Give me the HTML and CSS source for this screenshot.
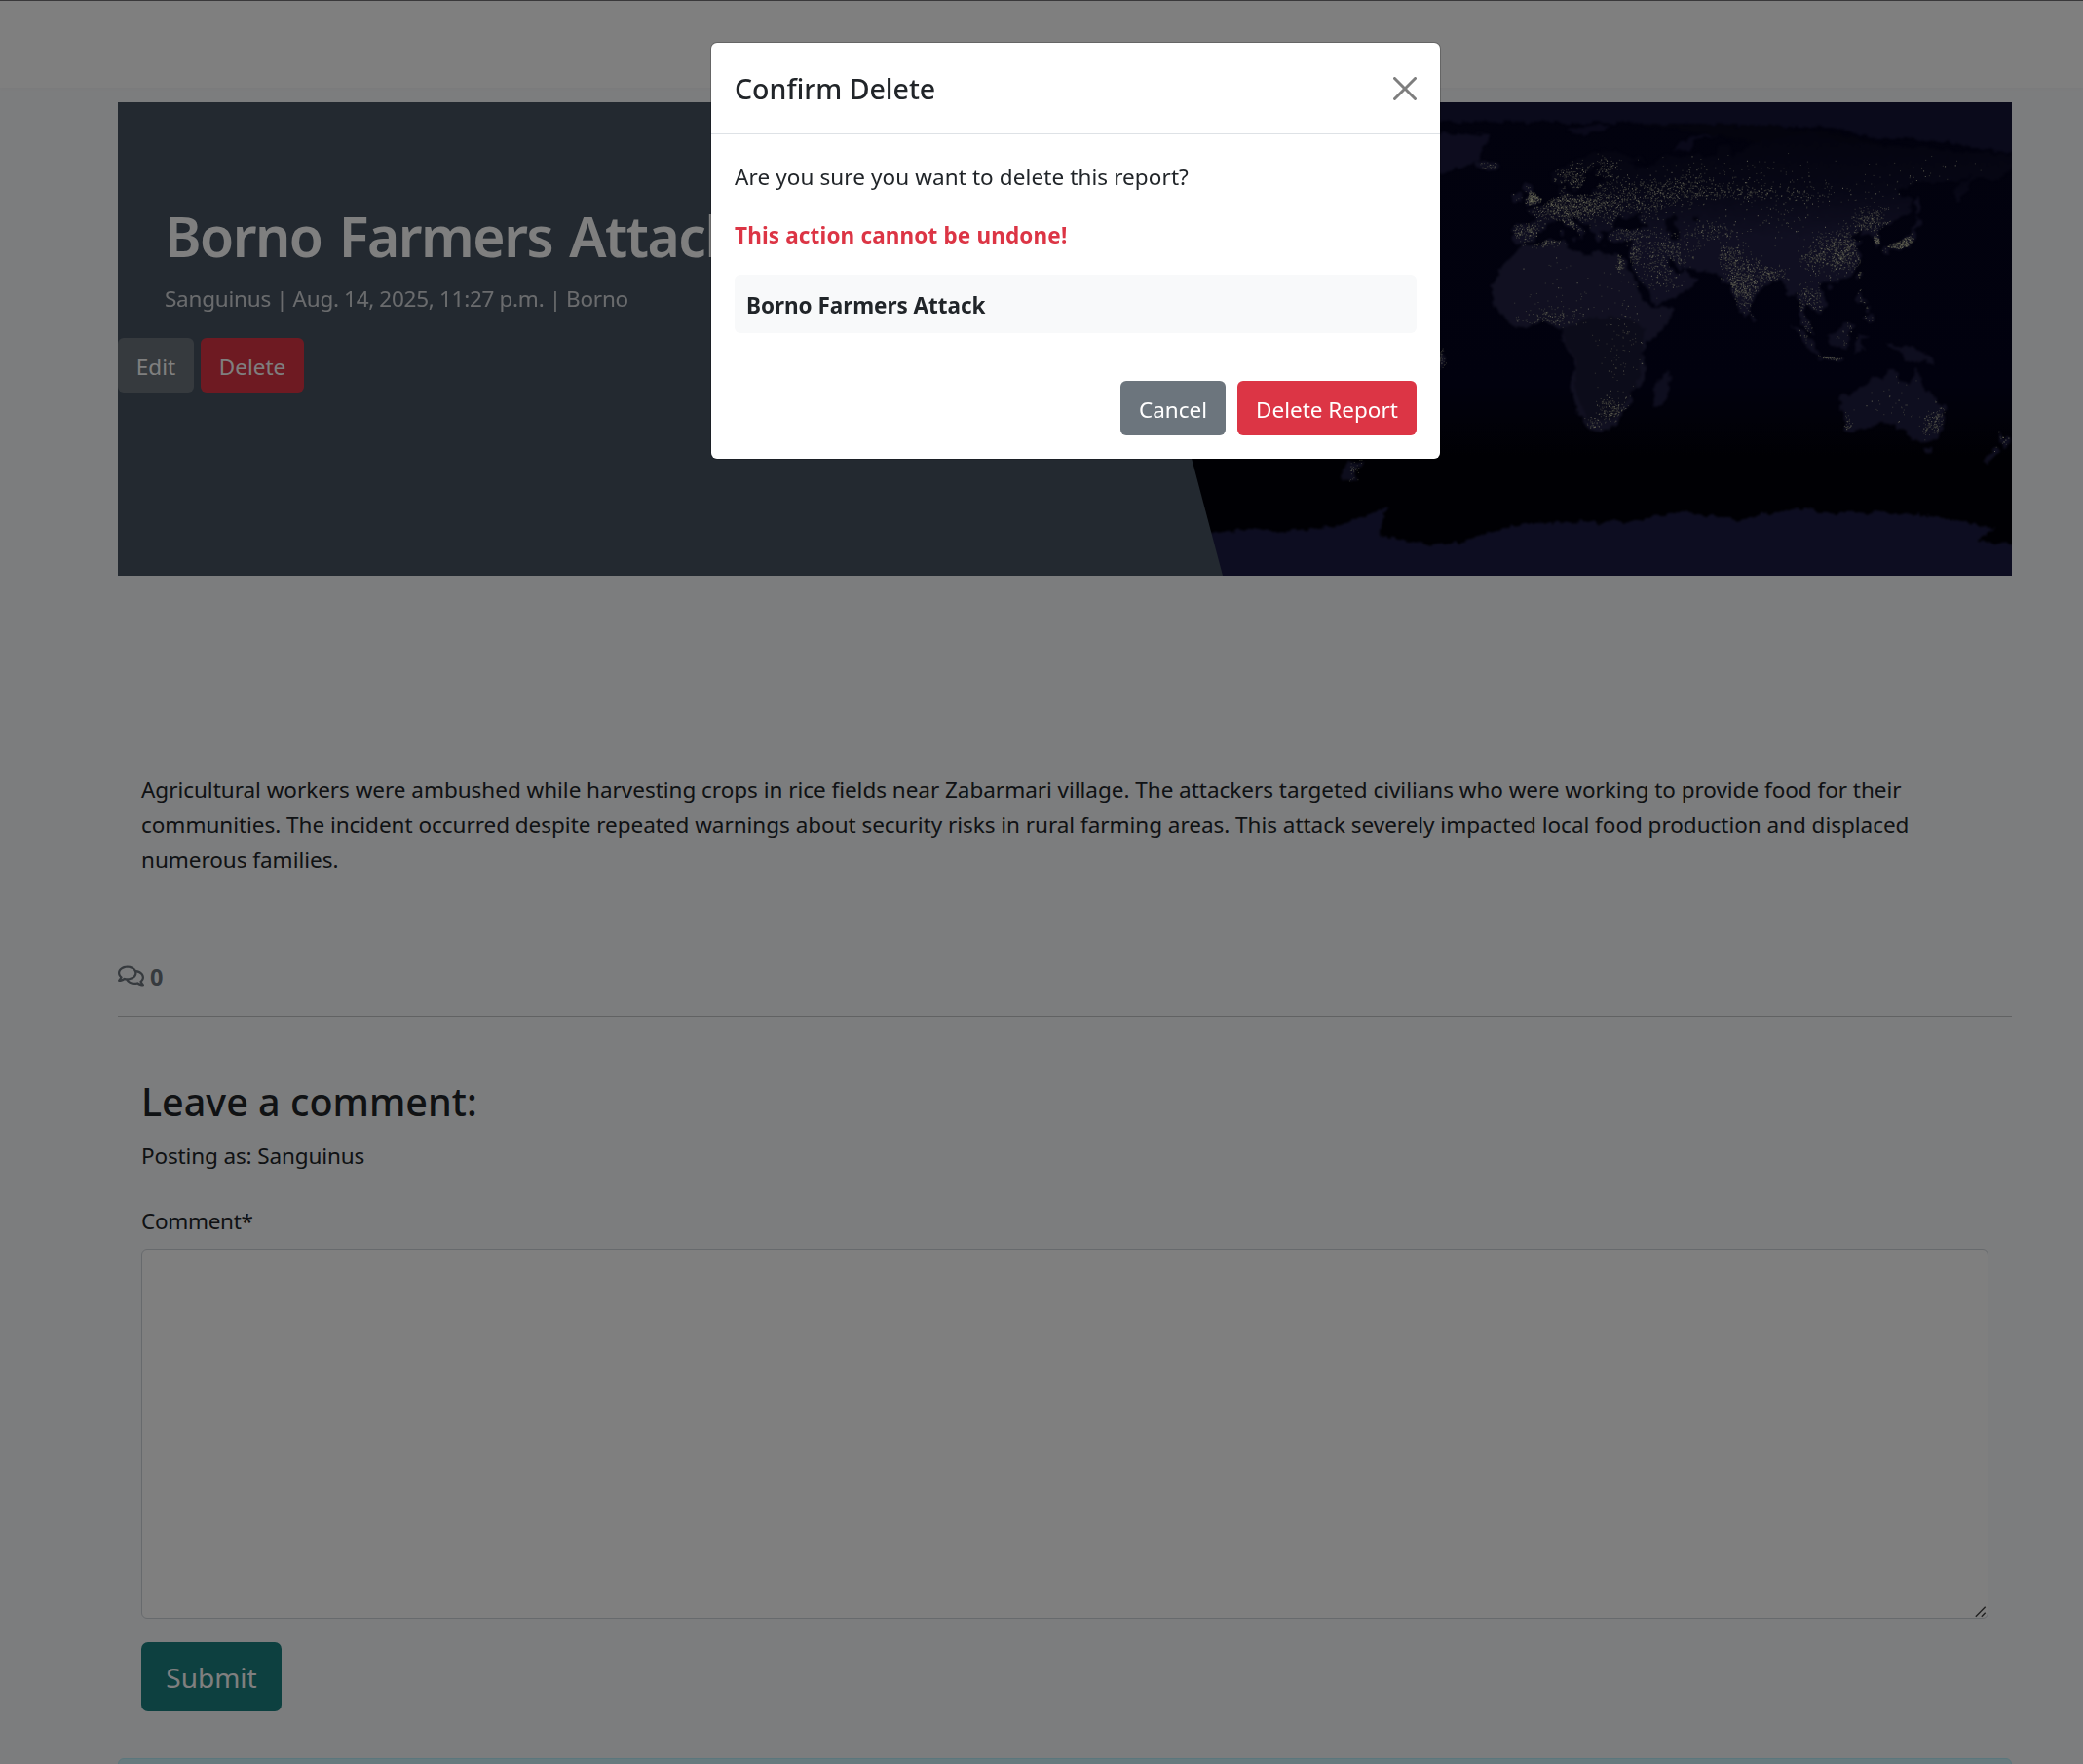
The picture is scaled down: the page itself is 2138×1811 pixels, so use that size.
FILE: index.html
```html
<!DOCTYPE html>
<html lang="en">
<head>
<meta charset="utf-8">
<title>Borno Farmers Attack</title>
<link rel="stylesheet" href="styles.css">
</head>
<body>
<header class="navbar"></header>
<main class="container">
  <section class="hero">
    <svg class="hero-map" viewBox="0 0 1944 486" aria-hidden="true">
      <defs>
        <filter id="coast" x="-5%" y="-5%" width="110%" height="110%" color-interpolation-filters="sRGB">
          <feTurbulence type="fractalNoise" baseFrequency="0.12" numOctaves="3" seed="4" result="n"/>
          <feDisplacementMap in="SourceGraphic" in2="n" scale="9" xChannelSelector="R" yChannelSelector="G" result="d"/>
          <feGaussianBlur in="d" stdDeviation="0.8"/>
        </filter>
        <linearGradient id="sea" x1="0" y1="0" x2="0" y2="1">
          <stop offset="0" stop-color="#04041c"/><stop offset=".6" stop-color="#03031c"/><stop offset=".75" stop-color="#010108"/><stop offset="1" stop-color="#010108"/>
        </linearGradient>
        <linearGradient id="north" gradientUnits="userSpaceOnUse" x1="0" y1="75" x2="0" y2="38">
          <stop offset="0" stop-color="#090920"/><stop offset=".5" stop-color="#0e0e2a"/><stop offset="1" stop-color="#201f42"/>
        </linearGradient>
      </defs>
      <rect width="1944" height="486" fill="url(#sea)"/>
      <g filter="url(#coast)">
        <path fill="#141436" d="M1000-10V20L1360 20 1620 22 1760 26 1800 36 1870 40 1954 54V-10Z"/>
        <path fill="#08081c" d="M1560 22 1700 24 1775 34 1830 48 1700 44Z"/>
        <path fill="#1a193c" d="M1340 32 1410 34 1400 50 1396 62 1370 68 1345 78Z"/>
        <path fill="#1b1b42" d="M1000 442 1124 442 1178 437 1187 442 1252 435 1278 426 1303 415 1296 435 1294 445 1342 454 1378 452 1405 442 1444 432 1546 431 1605 421 1662 428 1731 416 1755 422 1821 421 1875 427 1928 437 1908 450 1954 453V496H1000Z"/>
        <g transform="translate(1457.500 243) scale(2.73 -2.73)">
          <path id="europe" fill="url(#north)" d="M-9.500 37-9 43-1.500 43.400-1 46-4.500 48.300 1.500 50 4 52 8 54 8 57 10.500 57.500 10 55 14 54 20 54.500 22 57.500 24 59 30 60 25 60.300 21.500 61 22 63.500 25 65.500 22 65.800 17.500 62 18.500 60 16.500 57 14 55.400 11 59 8 58 5 59 5 62 12 66 17 69 25 71 31 70 41 67 34 66.600 38 64 44 66 46 68.300 54 68.500 60 69 67 69 68 73 73 73 73 68 80 73 87 75 104 77.700 113 74 128 73 140 72.500 160 70 170 70 180 69 180 65 177 62.500 170 60 163 60 162 56 157 51 156 57 164 62 155 59 142 59 135 54.700 141 53 140 48 132 43 127.500 40 129 36 126.500 34.500 126.500 37.500 125 39.500 121.500 39 122 40.500 118 39 119 37.200 122.300 37 119.500 35 122 31 121 28 117 23.500 110.500 21 108 21.500 106 19 109 13 107 10.500 105 9 104.500 10.500 100.500 13.400 99.500 10 103.400 4 104 1.400 101 3 98.300 8 98.500 13 97 17 94.300 16 91.500 22.500 87 21.500 82 16.700 80 13 80 10 77.500 8 75 12 73 18 72.500 21 70 21 67 24.800 61 25.200 57 27 53 26.700 50 30 48 30 50.500 26 52 24 56 26.200 56.500 24.500 60 22.500 57 18.500 52 15.500 45 12.800 43 13 42.500 16.500 39 21 35 28 34.300 31.300 36 36.500 30.500 36.500 27 37 26 40 30 41 36 41.500 41.500 41.700 37.500 45 39 47 35 46.500 33.500 44.700 30.500 46.400 28 43.500 28 41.200 23.500 40.500 24 38 23 36.500 19.500 41 19.500 42 14 45.300 12.300 45 13.700 43.500 18.500 40 16.500 39.700 17 38.500 15.700 38 15.500 40 12 42 9 44.400 3.500 43.300 3 41.800 0 40 0 38.700-2 36.800-5.500 36Z"/>
          <path id="africa" fill="#222142" d="M-17 15-17 21-13 28-10 31-6 35.800-2 35 3 37 10 37.300 11 34 15 32.300 20 31 20 32.800 25 31.700 32 31.200 34 27 37 21 39 15.500 43 11.800 51 11.900 50 8 46 2.500 41-2 39-6 40.500-11 40-16 35-20 35.500-24 32.500-27 30-31 26-34 20-34.800 18-33 15-27 12-18 13.700-11 12-5 9 0 9.500 4 5 5.500 2 6.300-4 5.200-8 4.400-13 8.500-16 12Z"/>
          <path fill="#16152f" d="M9 4 20 8 34 8 40 4 39-6 38-16 33-24 28-30 18-31 14-18 14-8 10 0Z" opacity=".7"/>
          <path id="isles" fill="#1d1c3e" d="M-5 50 1 51 1.500 52.800-1.500 55-2 57.500-5 58.500-5.500 56-3 54-5 52ZM-10 52-6 52-6 55-8 55-10 54ZM-24 65.500-22 64-18 63.500-14 65-16 66.500-22 66.300ZM80 9.500 82 7 80 6ZM44-25 47-25 50-15.500 49-12 44-17ZM95.500 5.500 98 4.500 104-2 106-6 102-4ZM105-6.200 108-6.800 114.500-7.500 114-8.700 106-7.200ZM109 1.500 111 1.500 117 7 119 5 117.500 0 116-4 110-2.500ZM119-5.500 120 1 125 1.500 121-.5 123-4.500 121-3 120.500-5.500ZM131-1 135-3 141-2.600 147-6 150-10.500 146-8.500 143-9 138-8.300 137-5 132-3ZM114-22 122-18 126-14 130-15 131-11.500 136.500-12 135.500-15 140-17.500 142.300-10.800 146-19 153-26 153-31 150-37.500 146-39 140-38 138-35 134-32.500 129-31.700 124-33.500 118-35 115-34 115.500-31 113.500-26ZM145-41 148-41 147-43.500ZM173-34.500 175-37 178.400-37.800 176-41 175-41 174-39ZM172.500-40.700 174-42 171-45 169-46.600 167-46ZM130 31.500 132 31.500 132 34 136 33.500 139 34.700 141 36 142 39.600 141 41.500 140 39 137 37 133 35.500 130.500 34 129.700 33ZM140 41.600 143.500 42 145.500 43.300 141.800 45.500 141.500 43.300ZM142 46 144 49 143 54 142 52ZM120.100 23 121 22 122 25 121 25ZM120 18.500 122 18.500 121.500 15 124 13 121 13.500 120 16ZM122 8 125.500 9.500 126.500 7 125 5.500ZM108.700 19 110 18.200 111 19.500 110 20.200ZM123 12 125 12.500 125 10 123 9.500ZM8.500 41 9.700 41 9.500 39 8.500 39ZM12.500 38 15.500 38 15 36.700ZM32.500 35 34.500 35.500 33.500 34.600ZM23.500 35.500 26 35.200 24 34.900Z"/>
          <path fill="#141334" d="M10 78 20 80.500 27 80 18 76.500ZM51 71 56 71 60 75 68 76.500 60 76.500 54 74Z"/>
          <path fill="#05051c" d="M47 44 51 47 53 45 50.500 44 53.500 40 53.500 37 50 37.500 49 41ZM58 46 61 46.500 61 44 59 44Z"/>
          <path fill="#1b1a3a" d="M-72-46-65-46-69-50-68-54-74-52Z"/>
          <path fill="#1f1d3e" d="M-50 0-35-6-35-9-39-14-40-22-50-26Z"/>
        </g>
      </g>
      <path id="glow" fill="none" stroke="#c0c29c" stroke-width="1" opacity=".5"/>
      <path id="cities" fill="none" stroke="#efeec4" stroke-width="1.200" opacity=".7"/>
    </svg>
    <div class="hero-panel"></div>
    <div class="hero-content">
      <div class="hero-text">
        <h1 class="title">Borno Farmers Attack</h1>
        <p class="byline">Sanguinus | Aug. 14, 2025, 11:27 p.m. | Borno</p>
      </div>
      <div class="actions">
        <button class="btn btn-secondary btn-edit">Edit</button>
        <button class="btn btn-danger btn-del">Delete</button>
      </div>
    </div>
  </section>

  <p class="report">Agricultural workers were ambushed while harvesting crops in rice fields near Zabarmari village. The attackers targeted civilians who were working to provide food for their communities. The incident occurred despite repeated warnings about security risks in rural farming areas. This attack severely impacted local food production and displaced numerous families.</p>

  <div class="count">
    <svg class="count-icon" viewBox="0 0 576 512" aria-hidden="true"><path fill="currentColor" d="M532 386.200c27.500-27.100 44-61.100 44-98.200 0-80-76.500-146.100-176.200-157.900C368.300 72.500 294.300 32 208 32 93.100 32 0 103.600 0 192c0 37 16.500 71 44 98.200-15.300 30.700-37.300 54.500-37.700 54.900-6.300 6.700-8.100 16.500-4.400 25 3.600 8.500 12 14 21.200 14 53.500 0 96.700-20.200 125.200-38.800 9.200 2.100 18.700 3.700 28.400 4.900C208.100 407.600 281.800 448 368 448c20.800 0 40.800-2.400 59.800-6.800C456.300 459.700 499.400 480 553 480c9.200 0 17.500-5.500 21.200-14 3.600-8.500 1.900-18.300-4.400-25-.4-.3-22.500-24.100-37.800-54.800zm-392.800-92.300L122.100 305c-14.100 9.100-28.500 16.300-43.100 21.400 2.700-4.700 5.400-9.700 8-14.800l15.500-31.100L77.700 256C64.200 242.600 48 220.700 48 192c0-60.700 73.300-112 160-112s160 51.300 160 112-73.300 112-160 112c-16.500 0-33-1.900-49-5.600l-19.800-4.500zM498.300 352l-24.700 24.400 15.500 31.100c2.600 5.100 5.300 10.100 8 14.800-14.600-5.100-29-12.300-43.100-21.400l-17.100-11.100-19.900 4.600c-16 3.700-32.500 5.600-49 5.600-54 0-102.200-20.100-131.300-49.700C338 339.500 416 272.900 416 192c0-3.400-.4-6.700-.7-10C479.700 196.500 528 238.800 528 288c0 28.700-16.200 50.600-29.700 64z"/></svg>
    <strong class="count-value">0</strong>
  </div>
  <hr class="rule">

  <form class="comment-form">
    <h3 class="form-title">Leave a comment:</h3>
    <p class="posting">Posting as: Sanguinus</p>
    <label class="label" for="body">Comment*</label>
    <div class="field-wrap">
      <textarea class="field" id="body"></textarea>
      <svg class="grip" viewBox="0 0 12 12" aria-hidden="true"><path d="M.8 10.700 10.700.8M6.800 10.700l3.900-3.900"/></svg>
    </div>
    <button class="btn-submit" type="button">Submit</button>
  </form>
  <div class="alert"></div>
</main>

<div class="backdrop"></div>
<div class="modal" role="dialog">
  <div class="modal-header">
    <h5 class="modal-title">Confirm Delete</h5>
    <svg class="close" viewBox="0 0 16 16" aria-label="Close"><path d="M.293.293a1 1 0 0 1 1.414 0L8 6.586 14.293.293a1 1 0 1 1 1.414 1.414L9.414 8l6.293 6.293a1 1 0 0 1-1.414 1.414L8 9.414l-6.293 6.293a1 1 0 0 1-1.414-1.414L6.586 8 .293 1.707a1 1 0 0 1 0-1.414z"/></svg>
  </div>
  <div class="modal-body">
    <p class="question">Are you sure you want to delete this report?</p>
    <p class="warning">This action cannot be undone!</p>
    <div class="subject">Borno Farmers Attack</div>
  </div>
  <div class="modal-footer">
    <button class="btn btn-secondary btn-cancel">Cancel</button>
    <button class="btn btn-danger btn-confirm">Delete Report</button>
  </div>
</div>
<script src="map.js"></script>
</body>
</html>
```
FILE: styles.css
```css
* { box-sizing: border-box; }

body {
  margin: 0;
  height: 1811px;
  overflow: hidden;
  background: #f9fafc;
  color: #212529;
  font: 22.5px/36px "Noto Sans", "Open Sans", sans-serif;
}

h1, h3, h5, p { margin: 0; }

.navbar {
  height: 90px;
  background: #fff;
  border-top: 1px solid #727074;
  box-shadow: 0 1px 4px rgba(0, 0, 0, .025);
}

.container { width: 1944px; margin: 15px 0 0 121px; }

/* Hero banner */
.hero { position: relative; height: 486px; overflow: hidden; background: #010108; }
.hero-map { position: absolute; inset: 0; width: 1944px; height: 486px; }
.hero-panel {
  position: absolute;
  inset: 0;
  background: #465361;
  clip-path: polygon(0 0, 1005px 0, 1134px 100%, 0 100%);
}
.hero-content { position: relative; padding-top: 101px; }
.hero-text { padding: 0 48px; color: #fff; }
.title { font-size: 57px; line-height: 72px; font-weight: 600; letter-spacing: -1.5px; word-spacing: 4px; }
.byline { margin-top: 11px; color: #dfe1e4; opacity: .93; letter-spacing: -.23px; word-spacing: -.4px; }
.actions { display: flex; gap: 7px; margin-top: 22px; }

.btn {
  height: 56px;
  padding: 3px 0 0;
  border: 0;
  border-radius: 6px;
  color: #fff;
  font: inherit;
  text-align: center;
}
.btn-secondary { background: #6c757d; }
.btn-danger { background: #dc3545; }
.btn-edit { width: 78px; }
.btn-del { width: 106px; }
.btn-cancel { width: 108px; }
.btn-confirm { width: 184px; }

/* Report */
.report { padding: 202px 24px 0; letter-spacing: -.025px; }
.count {
  display: flex;
  align-items: center;
  gap: 6px;
  margin-top: 84px;
  height: 36px;
  color: #6c757d;
}
.count-icon { width: 27px; height: 24px; margin-top: -2px; }
.count-value { margin-top: -1px; font-size: 23.5px; }
.rule { margin: 22px 0 0; border: 0; border-top: 1px solid #212529; opacity: .25; }

/* Comment form */
.comment-form { padding: 62px 24px 0; }
.form-title { font-size: 39.5px; line-height: 50px; font-weight: 500; }
.posting { margin-top: 13px; letter-spacing: -.13px; }
.label { display: block; margin-top: 31px; letter-spacing: -.3px; }
.field-wrap { position: relative; margin-top: 10px; }
.field {
  display: block;
  width: 100%;
  height: 380px;
  border: 1px solid #ced4da;
  border-radius: 6px;
  background: #fff;
  resize: none;
}
.grip {
  position: absolute;
  right: 2px;
  bottom: 1px;
  width: 12px;
  height: 12px;
  fill: none;
  stroke: #444;
  stroke-width: 1.5;
}
.btn-submit {
  display: block;
  width: 144px;
  height: 71px;
  margin-top: 24px;
  padding: 1px 0 0;
  border: 0;
  border-radius: 7px;
  background: #1a8080;
  color: #fff;
  font: 28px/45px "Noto Sans", "Open Sans", sans-serif;
}
.alert {
  height: 80px;
  margin-top: 48px;
  border: 1px solid #b6effb;
  border-radius: 6px;
  background: #cff4fc;
}

/* Dialog */
.backdrop { position: fixed; inset: 0; background: rgba(0, 0, 0, .5); }
.modal {
  position: absolute;
  top: 44px;
  left: 730px;
  width: 748px;
  border-radius: 6px;
  background: #fff;
  box-shadow: 0 0 0 1px rgba(0, 0, 0, .2);
}
.modal-header {
  display: flex;
  align-items: center;
  justify-content: space-between;
  height: 94px;
  padding: 0 24px;
  border-bottom: 1px solid #dee2e6;
}
.modal-title { padding-top: 2px; font-size: 28.5px; line-height: 45px; font-weight: 500; }
.close { width: 24px; height: 24px; opacity: .5; }
.modal-body { padding: 26px 24px 24px; }
.question { letter-spacing: .1px; }
.warning { margin: 24px 0 22px; color: #dc3545; font-weight: 700; letter-spacing: .15px; }
.subject { padding: 14px 12px 10px; border-radius: 6px; background: #f8f9fa; font-weight: 700; letter-spacing: -.04px; }
.modal-footer {
  display: flex;
  justify-content: flex-end;
  gap: 12px;
  padding: 24px;
  border-top: 1px solid #dee2e6;
}
```
FILE: map.js
```js
// City lights: [longitude, latitude, spread in longitude, spread in latitude, count]
const regions = [
  [8, 50, 9, 4, 620], [-2, 52.5, 2.5, 2.5, 200], [12, 43.5, 5, 4, 160], [-4, 40, 4.500, 3, 190],
  [22, 50, 8, 5, 360], [14, 60, 8, 5, 260], [26, 63, 4, 4, 120], [38, 53, 12, 6, 420], [34, 39, 8, 3, 170],
  [55, 56, 12, 4, 240], [75, 55, 18, 2.500, 180], [100, 55, 18, 3, 90], [3, 36, 6, 1.200, 90],
  [36, 32, 2, 4, 90], [31, 29, 1, 3, 70], [46, 26, 7, 6, 190], [50, 34, 7, 4, 170], [65, 40, 8, 3, 120],
  [77, 21, 6, 8, 620], [72, 31, 3, 3, 110], [88, 24, 4, 2, 110], [114, 33, 7, 6, 560], [125, 44, 6, 4, 200],
  [104, 30, 4, 4, 130], [137, 35.500, 5, 2.500, 420], [127.500, 36.500, 1.500, 1.500, 90], [121, 24, 1, 1.500, 40],
  [101, 14, 3, 5, 120], [107, 15, 3, 6, 80], [109, -7.200, 5, .8, 110], [102, 3, 3, 4, 70], [122, 13, 3, 5, 90],
  [115, 2, 7, 6, 50], [28, -27, 4, 4, 170], [20, -32, 4, 2, 50], [6, 8, 9, 3, 130], [32, -4, 7, 12, 90],
  [149, -33, 4, 4, 110], [151, -26, 2, 5, 40], [116, -32, 1.500, 2, 30], [174, -39, 3, 4, 60],
  [134, -25, 14, 8, 40], [-18, 65, 4, 1, 26], [140, 60, 20, 6, 60], [90, 45, 15, 6, 90],
  [-37, -8, 1.500, 3, 60], [-69, -49, 2, 3, 30], [70, 63, 25, 4, 110], [15, 15, 20, 10, 60]
];

let seed = 20250814;
function random() {
  seed = (seed * 1664525 + 1013904223) >>> 0;
  return seed / 4294967296;
}
function spread() {
  return (random() + random() + random() - 1.5) * 1.35;
}

const land = ["europe", "africa", "isles"].map(id => document.getElementById(id));
const svg = document.querySelector(".hero-map");
const dots = ["", ""];
for (const [lon, lat, dx, dy, count] of regions) {
  for (let i = 0; i < count; i++) {
    const point = svg.createSVGPoint();
    point.x = lon + spread() * dx;
    point.y = lat + spread() * dy;
    if (lon > -30 && !land.some(shape => shape.isPointInFill(point))) continue;
    const x = 1457 + point.x * 2.73;
    const y = 242.5 - point.y * 2.73;
    dots[random() < 0.16 ? 1 : 0] += `M${x.toFixed(1)} ${y.toFixed(1)}h1`;
  }
}
document.getElementById("glow").setAttribute("d", dots[0]);
document.getElementById("cities").setAttribute("d", dots[1]);
```
